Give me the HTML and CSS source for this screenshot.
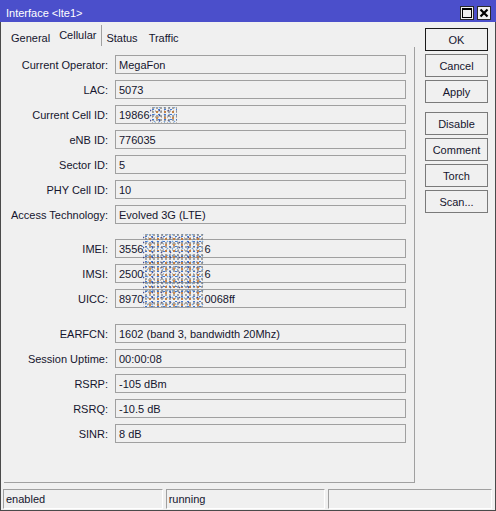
FILE: index.html
```html
<!DOCTYPE html>
<html>
<head>
<meta charset="utf-8">
<title>Interface &lt;lte1&gt;</title>
<link rel="stylesheet" href="styles.css">
</head>
<body>
<div class="window">
  <div class="titlebar">
    <span class="title">Interface &lt;lte1&gt;</span>
    <div class="tbtns">
      <span class="tbtn"><svg width="12" height="12" viewBox="0 0 12 12"><rect x="1.5" y="1.5" width="9" height="9" fill="none" stroke="#000" stroke-width="1"/><line x1="1" y1="2" x2="11" y2="2" stroke="#000" stroke-width="2"/></svg></span>
      <span class="tbtn"><svg width="12" height="12" viewBox="0 0 12 12"><path d="M2.5 2.5 L9.5 9.5 M9.5 2.5 L2.5 9.5" stroke="#000" stroke-width="2.2"/></svg></span>
    </div>
  </div>
  <div class="main">
    <div class="left">
      <div class="tabs">
        <span class="tab t1">General</span>
        <span class="tab active">Cellular</span>
        <span class="tab t3">Status</span>
        <span class="tab t4">Traffic</span>
      </div>
      <div class="panel">
        <div class="form">
          <div class="row"><span class="lbl">Current Operator:</span><span class="val">MegaFon</span></div>
          <div class="row"><span class="lbl">LAC:</span><span class="val">5073</span></div>
          <div class="row"><span class="lbl">Current Cell ID:</span><span class="val">19866<span class="noise small"></span></span></div>
          <div class="row"><span class="lbl">eNB ID:</span><span class="val">776035</span></div>
          <div class="row"><span class="lbl">Sector ID:</span><span class="val">5</span></div>
          <div class="row"><span class="lbl">PHY Cell ID:</span><span class="val">10</span></div>
          <div class="row"><span class="lbl">Access Technology:</span><span class="val">Evolved 3G (LTE)</span></div>
          <div class="row group"><span class="lbl">IMEI:</span><span class="val">3556<span class="gap"></span>6</span></div>
          <div class="row"><span class="lbl">IMSI:</span><span class="val">2500<span class="gap"></span>6</span></div>
          <div class="row"><span class="lbl">UICC:</span><span class="val">8970<span class="gap"></span>0068ff</span></div>
          <div class="row group2"><span class="lbl">EARFCN:</span><span class="val">1602 (band 3, bandwidth 20Mhz)</span></div>
          <div class="row"><span class="lbl">Session Uptime:</span><span class="val">00:00:08</span></div>
          <div class="row"><span class="lbl">RSRP:</span><span class="val">-105 dBm</span></div>
          <div class="row"><span class="lbl">RSRQ:</span><span class="val">-10.5 dB</span></div>
          <div class="row"><span class="lbl">SINR:</span><span class="val">8 dB</span></div>
        </div>
        <div class="noise big"></div>
      </div>
    </div>
    <div class="buttons">
      <span class="btn default">OK</span>
      <span class="btn">Cancel</span>
      <span class="btn">Apply</span>
      <span class="btn sep">Disable</span>
      <span class="btn">Comment</span>
      <span class="btn">Torch</span>
      <span class="btn">Scan...</span>
    </div>
  </div>
  <div class="statusbar">
    <span class="cell c1">enabled</span>
    <span class="cell c2">running</span>
    <span class="cell c3"></span>
  </div>
</div>
</body>
</html>
```
FILE: styles.css
```css
html, body {
  margin: 0;
  padding: 0;
  background: #f0f0f0;
}
body {
  font-family: "Liberation Sans", Arial, sans-serif;
  font-size: 11px;
  color: #15152e;
}
.window {
  width: 496px;
  height: 511px;
  box-sizing: border-box;
  border: 1px solid #4a4a4a;
  border-top: none;
  background: #f0f0f0;
  display: flex;
  flex-direction: column;
}
.titlebar {
  height: 22px;
  box-sizing: border-box;
  margin: 0 -1px;
  background: #4b4fcb;
  color: #fff;
  display: flex;
  align-items: center;
  justify-content: space-between;
  padding: 0 5px 0 6px;
}
.title {
  padding-top: 3px;
  font-size: 11px;
}
.tbtns {
  display: flex;
  gap: 3px;
  padding-top: 3px;
}
.tbtn {
  width: 12px;
  height: 12px;
  border: 1px solid #2a2a2a;
  background: #f0f0f0;
  display: flex;
  align-items: center;
  justify-content: center;
}
.main {
  display: flex;
  height: 464px;
}
.left {
  width: 411px;
  padding-left: 3px;
  display: flex;
  flex-direction: column;
}
.tabs {
  height: 25px;
  display: flex;
  align-items: flex-end;
}
.tab {
  font-size: 11px;
  line-height: 14px;
  padding-bottom: 2px;
}
.t1 {
  padding-left: 7px;
  padding-right: 9px;
}
.tab.active {
  padding: 0 5px 4px 0;
  border-right: 1px solid #a0a0a0;
  align-self: stretch;
  margin-top: 3px;
  margin-bottom: 1px;
  display: flex;
  align-items: flex-end;
}
.t3 {
  padding-left: 4px;
  padding-right: 11px;
}
.panel {
  position: relative;
  width: 411px;
  height: 436px;
  box-sizing: border-box;
  border-right: 1px solid #a0a0a0;
  border-bottom: 1px solid #a0a0a0;
  padding-top: 8px;
}
.form {
  display: flex;
  flex-direction: column;
  gap: 6px;
}
.row {
  display: flex;
  align-items: center;
  gap: 7px;
  height: 19px;
}
.row.group {
  margin-top: 9px;
}
.row.group2 {
  margin-top: 10px;
}
.lbl {
  width: 104px;
  text-align: right;
  white-space: nowrap;
  font-size: 11px;
}
.val {
  width: 291px;
  height: 19px;
  box-sizing: border-box;
  border: 1px solid #a0a0a0;
  padding-left: 3px;
  display: flex;
  align-items: center;
  font-size: 11px;
  white-space: nowrap;
}
.gap {
  display: inline-block;
  width: 61px;
  height: 10px;
}
.noise {
  background-image:
    radial-gradient(circle, rgba(50,110,210,0.9) 0.7px, transparent 1.1px),
    radial-gradient(circle, rgba(200,120,50,0.85) 0.7px, transparent 1.1px),
    radial-gradient(circle, rgba(120,120,120,0.75) 0.65px, transparent 1px),
    radial-gradient(circle, rgba(40,40,120,0.8) 0.7px, transparent 1.1px),
    radial-gradient(circle, rgba(90,150,220,0.8) 0.7px, transparent 1.1px),
    radial-gradient(circle, rgba(160,160,160,0.7) 0.6px, transparent 1px);
  background-size: 6px 5px, 8px 6px, 4px 4px, 9px 5px, 5px 7px, 3px 6px;
  background-position: 0 0, 3px 2px, 1px 3px, 5px 1px, 2px 4px, 1px 1px;
}
.noise.small {
  display: inline-block;
  width: 27px;
  height: 16px;
}
.noise.big {
  position: absolute;
  left: 139px;
  top: 187px;
  width: 62px;
  height: 73px;
}
.buttons {
  display: flex;
  flex-direction: column;
  gap: 3px;
  padding: 6px 0 0 10px;
}
.btn {
  width: 63px;
  height: 23px;
  box-sizing: border-box;
  border: 1px solid #7a7a7a;
  display: flex;
  align-items: center;
  justify-content: center;
  font-size: 11px;
}
.btn.default {
  border-color: #1a1a1a;
}
.btn.sep {
  margin-top: 6px;
}
.statusbar {
  display: flex;
  gap: 3px;
  padding: 3px 3px 0 2px;
}
.cell {
  height: 20px;
  box-sizing: border-box;
  border-top: 1px solid #a0a0a0;
  border-left: 1px solid #a0a0a0;
  border-right: 1px solid #fff;
  border-bottom: 1px solid #fff;
  padding: 2px 0 0 2px;
  line-height: 15px;
  font-size: 11px;
}
.c1 { width: 160px; }
.c2 { width: 160px; }
.c3 { width: 164px; }
```
